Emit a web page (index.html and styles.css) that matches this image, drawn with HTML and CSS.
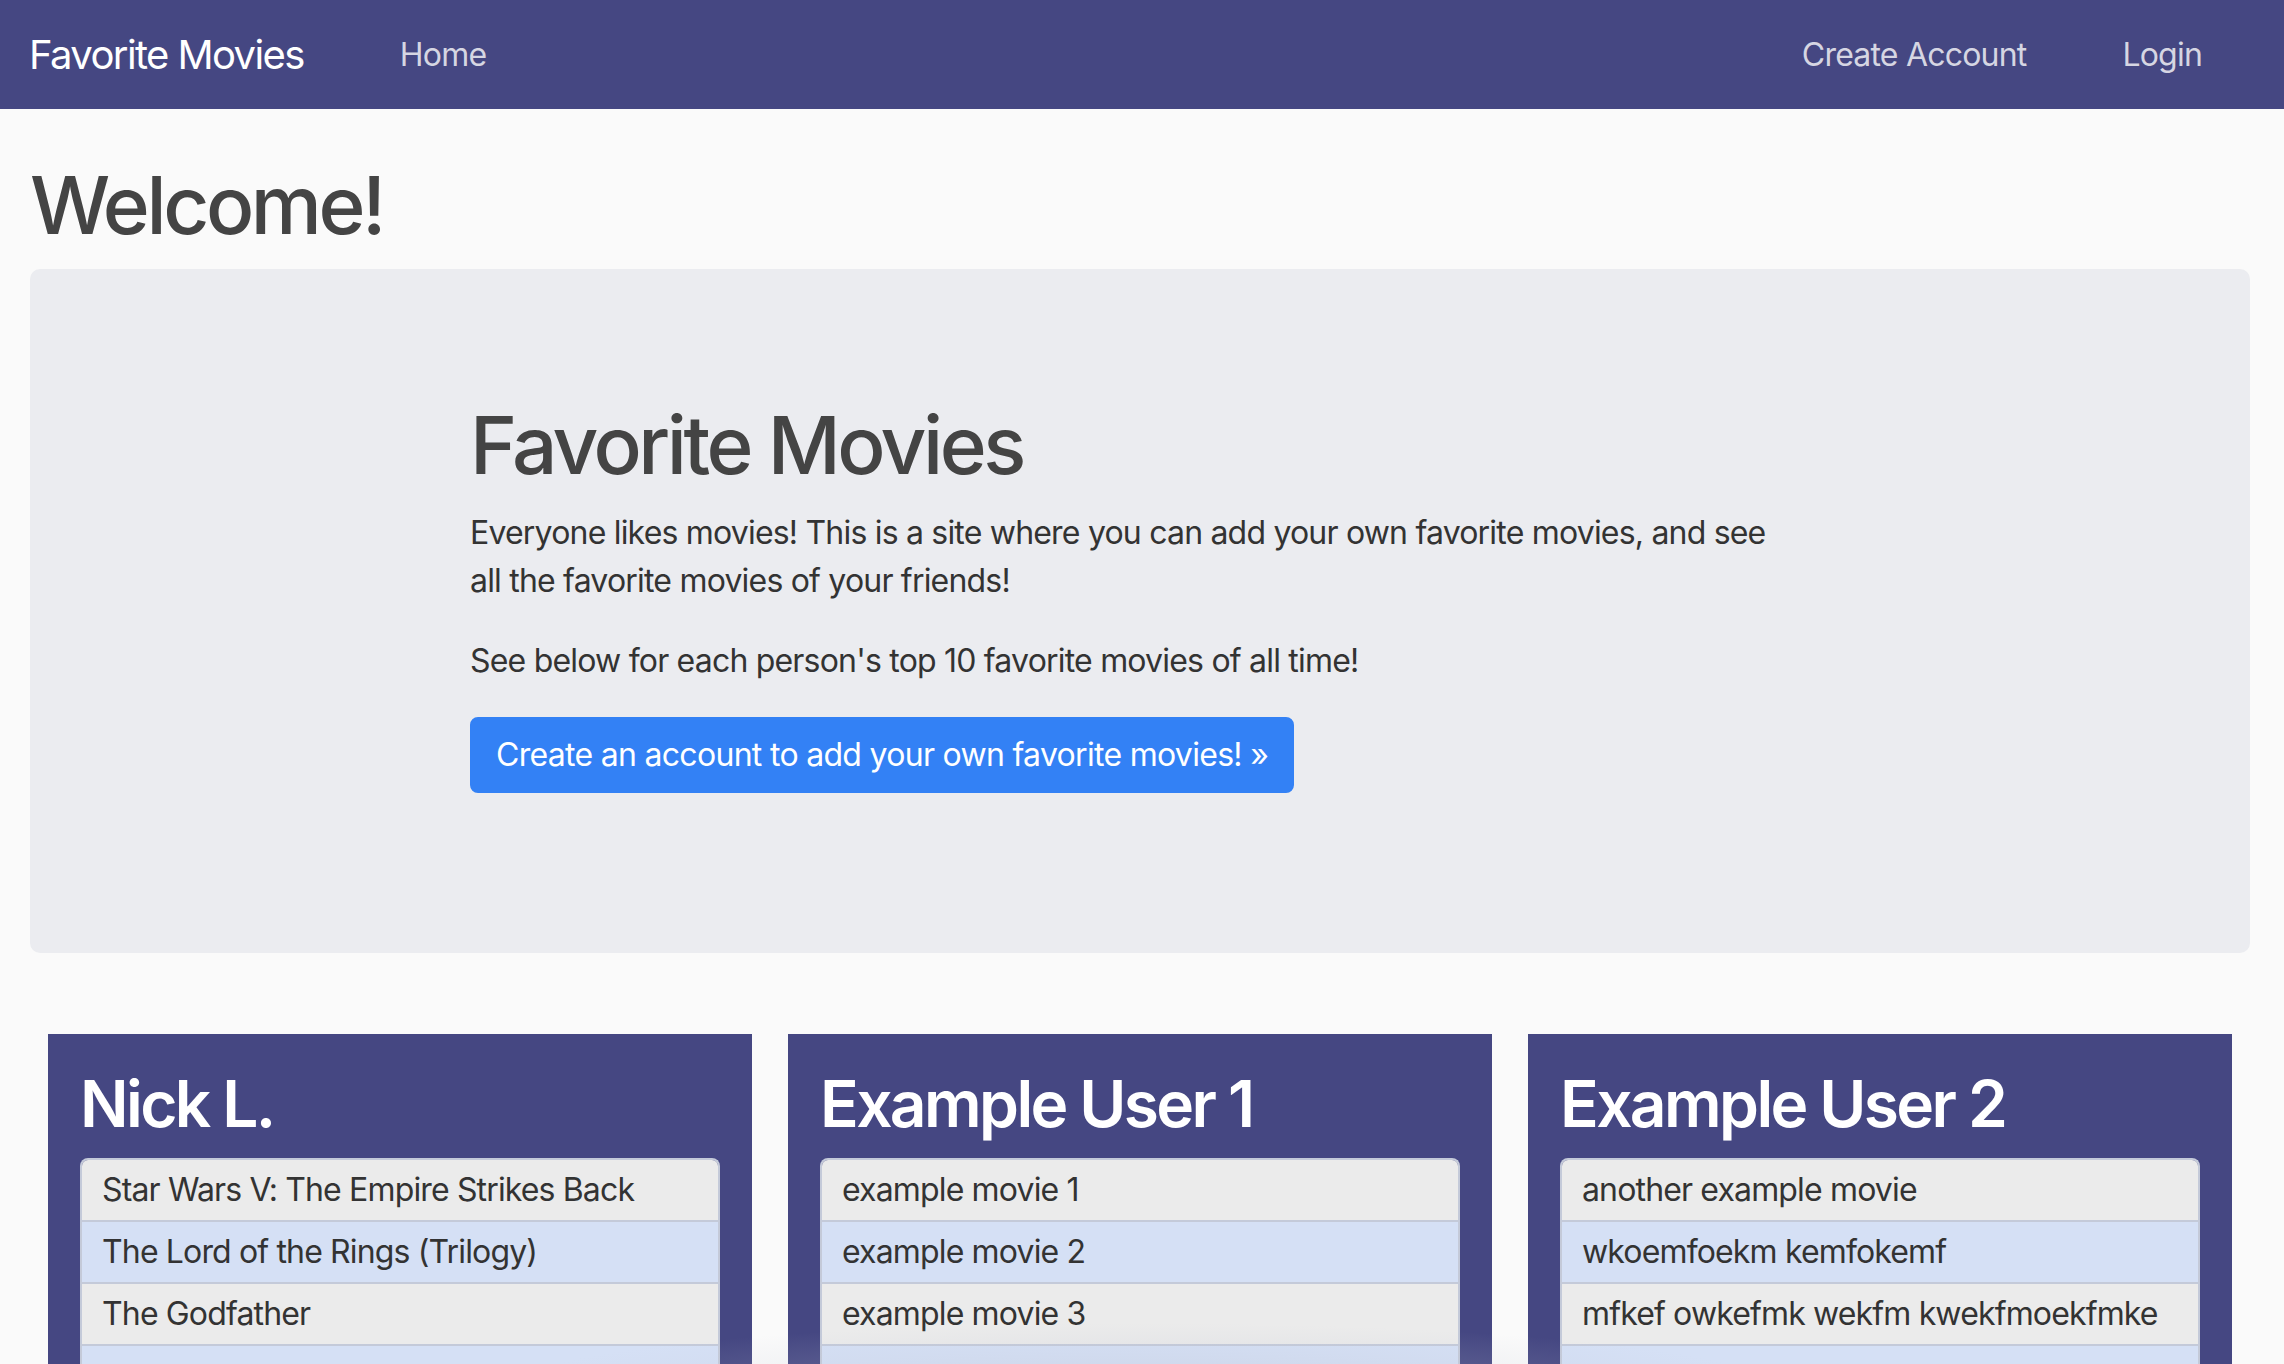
FILE: index.html
```html
<!DOCTYPE html>
<html lang="en">
<head>
<meta charset="utf-8">
<title>Favorite Movies</title>
<link rel="stylesheet" href="styles.css">
</head>
<body>
<nav class="navbar">
  <a class="brand" href="#">Favorite Movies</a>
  <ul class="nav nav-left">
    <li><a class="nav-link" href="#">Home</a></li>
  </ul>
  <ul class="nav nav-right">
    <li><a class="nav-link" href="#">Create Account</a></li>
    <li><a class="nav-link" href="#">Login</a></li>
  </ul>
</nav>
<main class="page">
  <h1 class="title">Welcome!</h1>
  <section class="jumbotron">
    <div class="jumbo-inner">
      <h1 class="jumbo-title">Favorite Movies</h1>
      <p class="para">Everyone likes movies! This is a site where you can add your own favorite movies, and see all the favorite movies of your friends!</p>
      <p class="para">See below for each person's top 10 favorite movies of all time!</p>
      <p class="para"><a class="btn" href="#">Create an account to add your own favorite movies! &raquo;</a></p>
    </div>
  </section>
  <section class="cards">
    <div class="card">
      <h2 class="card-title">Nick L.</h2>
      <ul class="list">
        <li class="item">Star Wars V: The Empire Strikes Back</li>
        <li class="item alt">The Lord of the Rings (Trilogy)</li>
        <li class="item">The Godfather</li>
        <li class="item alt">&nbsp;</li>
      </ul>
    </div>
    <div class="card">
      <h2 class="card-title">Example User 1</h2>
      <ul class="list">
        <li class="item">example movie 1</li>
        <li class="item alt">example movie 2</li>
        <li class="item">example movie 3</li>
        <li class="item alt">&nbsp;</li>
      </ul>
    </div>
    <div class="card">
      <h2 class="card-title">Example User 2</h2>
      <ul class="list">
        <li class="item">another example movie</li>
        <li class="item alt">wkoemfoekm kemfokemf</li>
        <li class="item">mfkef owkefmk wekfm kwekfmoekfmke</li>
        <li class="item alt">&nbsp;</li>
      </ul>
    </div>
  </section>
</main>
<div class="shade"></div>
</body>
</html>
```

FILE: styles.css
```css
* { box-sizing: border-box; }
html, body { margin: 0; padding: 0; }
body {
  background: #fafafa;
  color: #333;
  font-family: Inter, "Noto Sans", "Liberation Sans", sans-serif;
  font-size: 32px;
  line-height: 48px;
  overflow: hidden;
  height: 1364px;
  position: relative;
}
a { text-decoration: none; }

.navbar {
  background: #454782;
  height: 109px;
  display: flex;
  align-items: center;
  padding: 0 34px 0 29px;
}
.brand {
  color: #fff;
  font-size: 40px;
  line-height: 60px;
  margin-right: 48px;
  letter-spacing: -1.6px;
}
.nav {
  list-style: none;
  margin: 0;
  padding: 0;
  display: flex;
}
.nav-right { margin-left: auto; }
.nav-link {
  display: block;
  color: rgba(255,255,255,0.78);
  padding: 16px 48px;
  font-size: 32px;
  line-height: 48px;
  letter-spacing: -0.8px;
}

.page { padding: 0 34px 0 30px; }
.title {
  margin: 48px 0 16px;
  font-size: 80px;
  line-height: 96px;
  font-weight: 500;
  color: #444;
  letter-spacing: -3.4px;
}
.jumbotron {
  background: #ebecf0;
  border-radius: 10px;
  padding: 128px 64px;
  margin-bottom: 81px;
}
.jumbo-inner {
  max-width: 1340px;
  margin: 0 auto;
}
.jumbo-title {
  margin: 0 0 16px;
  font-size: 80px;
  line-height: 96px;
  font-weight: 500;
  color: #444;
  letter-spacing: -3.5px;
}
.para {
  margin: 0 0 32px;
  max-width: 1310px;
  letter-spacing: -0.8px;
}
.btn {
  display: inline-block;
  background: #3381f5;
  color: #fff;
  border: 2px solid #3381f5;
  border-radius: 8px;
  padding: 12px 24px;
  font-size: 32px;
  line-height: 48px;
  letter-spacing: -0.7px;
}

.cards {
  display: grid;
  grid-template-columns: repeat(3, 1fr);
}
.card {
  background: #454782;
  margin: 0 18px;
  padding: 32px;
  height: 600px;
}
.card-title {
  margin: 0 0 16px;
  color: #fff;
  font-size: 64px;
  line-height: 76px;
  font-weight: 600;
  letter-spacing: -2.6px;
}
.list {
  list-style: none;
  margin: 0;
  padding: 0;
  border-radius: 8px;
  overflow: hidden;
  border: 2px solid #c4cad9;
  border-bottom: 0;
}
.item {
  background: #ebebeb;
  padding: 6px 20px;
  border-bottom: 2px solid #c4cad9;
  color: #333;
  letter-spacing: -0.85px;
  line-height: 48px;
}
.item.alt { background: #d5e0f5; }

.shade {
  position: absolute;
  left: 0;
  right: 0;
  bottom: 0;
  height: 110px;
  pointer-events: none;
  background: radial-gradient(ellipse 900px 90px at 50% 120%, rgba(190,195,210,0.35), rgba(190,195,210,0) 70%);
}
```
